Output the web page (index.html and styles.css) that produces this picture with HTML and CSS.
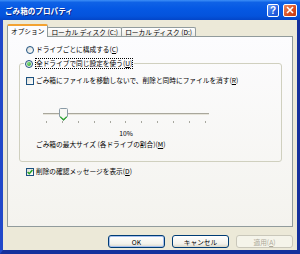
FILE: index.html
```html
<!DOCTYPE html>
<html lang="ja">
<head>
    <meta charset="UTF-8">
    <title>ごみ箱のプロパティ</title>
    <link rel="stylesheet" href="styles.css">
</head>
<body>
<div class="window">
    <div class="titlebar">
        <span class="title">ごみ箱のプロパティ</span>
        <span class="tbtn help">?</span>
        <span class="tbtn close">
            <svg width="8" height="8" viewBox="0 0 8 8"><path d="M1 1L7 7M7 1L1 7" stroke="#fff" stroke-width="1.6"/></svg>
        </span>
    </div>
    <div class="frame">
        <div class="tabs">
            <span class="tab on">オプション</span>
            <span class="tab">ローカル ディスク (C:)</span>
            <span class="tab">ローカル ディスク (D:)</span>
        </div>
        <div class="pane">
            <div class="row"><span class="radio"></span>ドライブごとに構成する(<u>C</u>)</div>
            <fieldset class="group">
                <legend class="row"><span class="radio on"></span><span class="focus">全ドライブで同じ設定を使う(<u>U</u>)</span></legend>
                <div class="row"><span class="check"></span>ごみ箱にファイルを移動しないで、削除と同時にファイルを消す(<u>R</u>)</div>
                <div class="slider">
                    <div class="track"></div>
                    <svg class="thumb" style="left: 16px" width="9" height="13" viewBox="0 0 9 13">
                        <path d="M1.5 .5h6a1 1 0 0 1 1 1v7l-4 4l-4-4v-7a1 1 0 0 1 1-1z" fill="#f7f7f4" stroke="#8a9aa6"/>
                        <path d="M1.2 8.6l3.3 3.2l3.3-3.2" fill="none" stroke="#2fa82f" stroke-width="1.2"/>
                    </svg>
                    <div class="ticks">
                        <i></i><i></i><i></i><i></i><i></i><i></i><i></i><i></i><i></i><i></i><i></i>
                    </div>
                </div>
                <div class="pct">10%</div>
                <div class="size">ごみ箱の最大サイズ (各ドライブの割合)(<u>M</u>)</div>
            </fieldset>
            <div class="row last">
                <span class="check">
                    <svg width="6" height="6" viewBox="0 0 6 6"><path d="M.6 3l1.7 1.8L5.4 1" fill="none" stroke="#21a121" stroke-width="1.4"/></svg>
                </span>削除の確認メッセージを表示(<u>D</u>)
            </div>
        </div>
        <div class="buttons">
            <button class="btn def">OK</button>
            <button class="btn">キャンセル</button>
            <button class="btn" disabled>適用(<u>A</u>)</button>
        </div>
    </div>
</div>
</body>
</html>
```

FILE: styles.css
```css
*{
    margin: 0;
    padding: 0;
    box-sizing: border-box;
}
body{
    width: 300px;
    height: 254px;
    overflow: hidden;
    font-family: "Noto Sans CJK JP", sans-serif;
    font-size: 6.7px;
    color: #000;
}
.window{
    height: 254px;
    display: flex;
    flex-direction: column;
    background: #ece9d8;
}
.titlebar{
    height: 20px;
    display: flex;
    align-items: center;
    padding: 0 3px 0 5px;
    background: linear-gradient(#3d8ff7 0, #0f62e6 12%, #0558e3 45%, #0453dc 80%, #0345c8 100%);
}
.title{
    flex: 1;
    color: #fff;
    font-weight: bold;
    font-size: 7.6px;
    text-shadow: 1px 1px 0 #0b2a8c;
}
.tbtn{
    height: 13px;
    border: 1px solid #fff;
    border-radius: 2px;
    display: flex;
    align-items: center;
    justify-content: center;
    color: #fff;
}
.help{
    width: 12px;
    margin-right: 4px;
    font-family: "Liberation Sans", sans-serif;
    font-weight: bold;
    font-size: 10px;
    background: linear-gradient(135deg, #6c9cf6, #2461e2 60%, #1c52cf);
}
.close{
    width: 14px;
    background: linear-gradient(135deg, #ee8a62, #d84c1f 60%, #c23a10);
}
.frame{
    flex: 1;
    display: flex;
    flex-direction: column;
    padding: 4px 4px 0;
    border-style: solid;
    border-width: 0 3px 4px;
    border-color: #2148c9 #15309c #15309c #2148c9;
}
.tabs{
    height: 12px;
    display: flex;
    align-items: flex-end;
}
.tab{
    height: 9px;
    line-height: 8px;
    padding: 0 3px;
    border: 1px solid #919b9c;
    border-bottom: none;
    border-radius: 2px 2px 0 0;
    background: linear-gradient(#fff, #ecebe5);
    white-space: nowrap;
}
.tab + .tab{
    margin-left: -1px;
}
.tab.on{
    position: relative;
    z-index: 1;
    height: 13px;
    line-height: 10px;
    margin-bottom: -1px;
    border-top: 2px solid #f3a231;
    background: #fcfcfe;
}
.pane{
    height: 191px;
    padding: 7px 10px 0 18px;
    border: 1px solid #919b9c;
    background: linear-gradient(#fcfcfe, #f4f3ee);
}
.row{
    height: 11px;
    line-height: 11px;
    display: flex;
    align-items: center;
    white-space: nowrap;
}
.radio,
.check{
    width: 8px;
    height: 8px;
    margin-right: 2px;
    flex: none;
    display: flex;
    align-items: center;
    justify-content: center;
    border: 1px solid #1c5180;
    background: linear-gradient(135deg, #dcdcd6, #fff);
}
.radio{
    border-radius: 50%;
}
.radio.on:after{
    content: "";
    width: 4px;
    height: 4px;
    border-radius: 50%;
    background: radial-gradient(circle at 35% 35%, #7ee07e, #1f9e1f);
}
.focus{
    outline: 1px dotted #000;
    outline-offset: -1px;
    padding: 0 1px;
}
.group{
    margin: 3px 0 0 -7px;
    padding: 6px 0 11px 6px;
    border: 1px solid #d0d0bf;
    border-radius: 3px;
}
.group legend{
    margin-left: -2px;
    padding: 0 1px;
}
.slider{
    position: relative;
    width: 166px;
    height: 20px;
    margin: 20px 0 0 17px;
}
.track{
    position: relative;
    top: 7px;
    height: 2px;
    border-top: 1px solid #a9a79c;
    background: #e6e4da;
}
.thumb{
    position: absolute;
    top: 2px;
}
.ticks{
    display: flex;
    justify-content: space-between;
    padding: 0 3px;
    margin-top: 13px;
}
.ticks i{
    width: 1px;
    height: 2px;
    background: #a8a89f;
}
.pct{
    width: 166px;
    margin: 2px 0 0 17px;
    text-align: center;
    line-height: 11px;
}
.size{
    margin-left: 10px;
    line-height: 11px;
    white-space: nowrap;
}
.last{
    margin-top: 4px;
}
.buttons{
    display: flex;
    justify-content: flex-end;
    gap: 7px;
    margin-top: 8px;
}
.btn{
    width: 57px;
    height: 13px;
    font-family: "Noto Sans CJK JP", sans-serif;
    font-size: 6.7px;
    color: #000;
    border: 1px solid #003c74;
    border-radius: 3px;
    background: linear-gradient(#fff, #f3f2ec 70%, #d9d6c8);
}
.btn.def{
    box-shadow: inset 0 0 0 1px #a6c0ee;
}
.btn:disabled{
    color: #aca899;
    border-color: #c9c7ba;
    background: #f5f4ea;
}
```
